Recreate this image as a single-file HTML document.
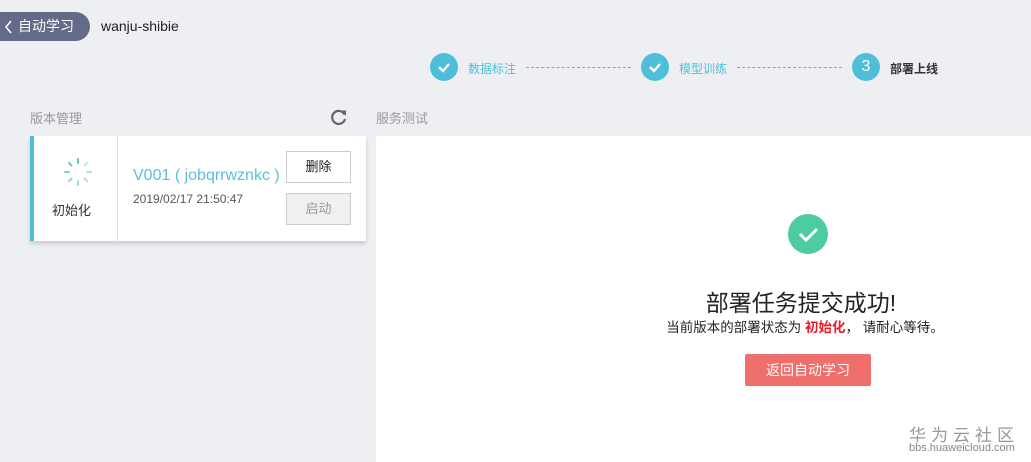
<!DOCTYPE html>
<html><head><meta charset="utf-8"><style>
*{margin:0;padding:0;box-sizing:border-box}
body{width:1031px;height:462px;background:#eeeff3;font-family:"Liberation Sans","Noto Sans CJK SC",sans-serif;position:relative;overflow:hidden;color:#333}
.a{position:absolute;white-space:nowrap}
.back{left:0;top:12px;width:90px;height:29px;background:#646b89;border-radius:0 15px 15px 0;color:#fff;font-size:14px;line-height:29px;padding-left:18px}
.circ{width:28px;height:28px;border-radius:50%;background:#4fbfd9;color:#fff;text-align:center;line-height:28px;font-size:16px;top:53px}
.lbl{top:60px;font-size:12px;color:#4fbfd9}
.dash{top:67px;height:0;border-top:1px dashed #4fbfd9}
</style></head><body>
<div class="a back"><svg class="a" style="left:4px;top:8px" width="9" height="14"><path d="M7 1L2 7L7 13" stroke="#fff" stroke-width="1.6" fill="none"/></svg>自动学习</div>
<div class="a" style="left:101px;top:18px;font-size:14px;color:#222">wanju-shibie</div>

<div class="a circ" style="left:430px"><svg width="28" height="28"><path d="M9 14l4 4 6-7" stroke="#fff" stroke-width="2.4" fill="none"/></svg></div>
<div class="a lbl" style="left:468px">数据标注</div>
<div class="a dash" style="left:526px;width:105px"></div>
<div class="a circ" style="left:641px"><svg width="28" height="28"><path d="M9 14l4 4 6-7" stroke="#fff" stroke-width="2.4" fill="none"/></svg></div>
<div class="a lbl" style="left:679px">模型训练</div>
<div class="a dash" style="left:737px;width:105px"></div>
<div class="a circ" style="left:852px">3</div>
<div class="a lbl" style="left:890px;color:#333;font-weight:bold">部署上线</div>

<div class="a" style="left:30px;top:108px;font-size:13px;color:#999">版本管理</div>
<svg class="a" style="left:330px;top:108px" width="18" height="18"><path d="M14.5 6.5A6.5 6.5 0 1 0 15 11" stroke="#666" stroke-width="2.2" fill="none"/><path d="M11 2.5L16 2.5L16 8z" fill="#666"/></svg>
<div class="a" style="left:376px;top:108px;font-size:13px;color:#999">服务测试</div>

<div class="a" style="left:30px;top:136px;width:336px;height:105px;background:#fff;border-left:4px solid #4fbfd0;box-shadow:0 3px 4px rgba(0,0,0,.15)">
 <div class="a" style="left:83px;top:0;width:1px;height:105px;background:#ddd"></div>
 <svg class="a" style="left:28px;top:20px" width="32" height="32"><g stroke="#5ec9b8" stroke-width="2" stroke-linecap="round">
 <path d="M16 3v4"/><path d="M16 25v4" opacity=".6"/><path d="M3 16h4" opacity=".8"/><path d="M25 16h4" opacity=".5"/>
 <path d="M7 7l2.5 2.5" opacity=".9"/><path d="M22.5 22.5L25 25" opacity=".5"/><path d="M25 7l-2.5 2.5" opacity=".4"/><path d="M7 25l2.5-2.5" opacity=".7"/></g></svg>
 <div class="a" style="left:18px;top:64px;font-size:13px;color:#333">初始化</div>
 <div class="a" style="left:99px;top:31px;font-size:16px;color:#5bbfd8">V001 ( jobqrrwznkc )</div>
 <div class="a" style="left:99px;top:56px;font-size:12px;color:#555">2019/02/17 21:50:47</div>
 <div class="a" style="left:252px;top:15px;width:65px;height:32px;border:1px solid #ccc;font-size:13px;text-align:center;line-height:30px;color:#222">删除</div>
 <div class="a" style="left:252px;top:57px;width:65px;height:32px;border:1px solid #ccc;background:#f0f0f0;font-size:13px;text-align:center;line-height:30px;color:#999">启动</div>
</div>

<div class="a" style="left:376px;top:136px;width:655px;height:326px;background:#fff"></div>
<div class="a" style="left:788px;top:214px;width:40px;height:40px;border-radius:50%;background:#4dcca0"><svg width="40" height="40"><path d="M12 20l6 6 11-11" stroke="#fff" stroke-width="3" fill="none"/></svg></div>
<div class="a" style="left:376px;width:850px;top:284px;text-align:center;font-size:23px;color:#222">部署任务提交成功!</div>
<div class="a" style="left:376px;width:858px;top:316px;text-align:center;font-size:13.5px;color:#222">当前版本的部署状态为 <b style="color:#e8202a">初始化</b>， 请耐心等待。</div>
<div class="a" style="left:745px;top:354px;width:126px;height:32px;background:#ee6f6c;border-radius:2px;color:#fff;font-size:14px;text-align:center;line-height:32px">返回自动学习</div>
<div class="a" style="left:909px;top:421px;font-size:17px;color:#999;letter-spacing:5px">华为云社区</div>
<div class="a" style="left:909px;top:442px;font-size:11px;color:#888">bbs.huaweicloud.com</div>
</body></html>
